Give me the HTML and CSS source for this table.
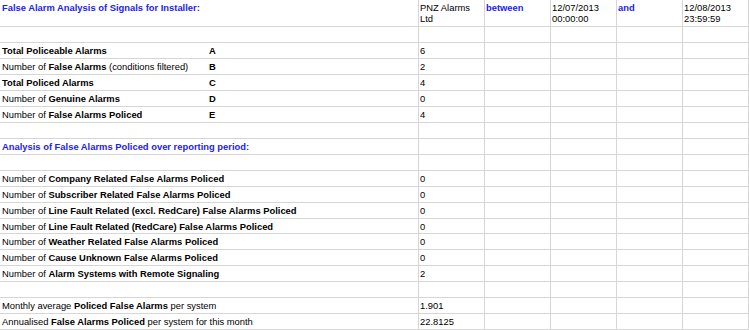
FILE: index.html
```html
<!DOCTYPE html>
<html lang="en">
<head>
<meta charset="utf-8">
<title>False Alarm Analysis</title>
<link rel="stylesheet" href="styles.css">
</head>
<body>
<div class="sheet">
  <div class="c label wide head"><b class="blue">False Alarm Analysis of Signals for Installer:</b></div>
  <div class="c val">PNZ Alarms<br>Ltd</div>
  <div class="c val"><b class="blue">between</b></div>
  <div class="c val">12/07/2013<br>00:00:00</div>
  <div class="c val"><b class="blue">and</b></div>
  <div class="c val">12/08/2013<br>23:59:59</div>

  <div class="c label wide"></div>
  <div class="c val"></div><div class="c val"></div><div class="c val"></div><div class="c val"></div><div class="c val"></div>

  <div class="c label"><b>Total Policeable Alarms</b></div>
  <div class="c letter"><b>A</b></div>
  <div class="c val">6</div><div class="c val"></div><div class="c val"></div><div class="c val"></div><div class="c val"></div>

  <div class="c label">Number of <b>False Alarms</b> (conditions filtered)</div>
  <div class="c letter"><b>B</b></div>
  <div class="c val">2</div><div class="c val"></div><div class="c val"></div><div class="c val"></div><div class="c val"></div>

  <div class="c label"><b>Total Policed Alarms</b></div>
  <div class="c letter"><b>C</b></div>
  <div class="c val">4</div><div class="c val"></div><div class="c val"></div><div class="c val"></div><div class="c val"></div>

  <div class="c label">Number of <b>Genuine Alarms</b></div>
  <div class="c letter"><b>D</b></div>
  <div class="c val">0</div><div class="c val"></div><div class="c val"></div><div class="c val"></div><div class="c val"></div>

  <div class="c label">Number of <b>False Alarms Policed</b></div>
  <div class="c letter"><b>E</b></div>
  <div class="c val">4</div><div class="c val"></div><div class="c val"></div><div class="c val"></div><div class="c val"></div>

  <div class="c label wide"></div>
  <div class="c val"></div><div class="c val"></div><div class="c val"></div><div class="c val"></div><div class="c val"></div>

  <div class="c label wide"><b class="blue">Analysis of False Alarms Policed over reporting period:</b></div>
  <div class="c val"></div><div class="c val"></div><div class="c val"></div><div class="c val"></div><div class="c val"></div>

  <div class="c label wide"></div>
  <div class="c val"></div><div class="c val"></div><div class="c val"></div><div class="c val"></div><div class="c val"></div>

  <div class="c label wide">Number of <b>Company Related False Alarms Policed</b></div>
  <div class="c val">0</div><div class="c val"></div><div class="c val"></div><div class="c val"></div><div class="c val"></div>

  <div class="c label wide">Number of <b>Subscriber Related False Alarms Policed</b></div>
  <div class="c val">0</div><div class="c val"></div><div class="c val"></div><div class="c val"></div><div class="c val"></div>

  <div class="c label wide">Number of <b>Line Fault Related (excl. RedCare) False Alarms Policed</b></div>
  <div class="c val">0</div><div class="c val"></div><div class="c val"></div><div class="c val"></div><div class="c val"></div>

  <div class="c label wide">Number of <b>Line Fault Related (RedCare) False Alarms Policed</b></div>
  <div class="c val">0</div><div class="c val"></div><div class="c val"></div><div class="c val"></div><div class="c val"></div>

  <div class="c label wide">Number of <b>Weather Related False Alarms Policed</b></div>
  <div class="c val">0</div><div class="c val"></div><div class="c val"></div><div class="c val"></div><div class="c val"></div>

  <div class="c label wide">Number of <b>Cause Unknown False Alarms Policed</b></div>
  <div class="c val">0</div><div class="c val"></div><div class="c val"></div><div class="c val"></div><div class="c val"></div>

  <div class="c label wide">Number of <b>Alarm Systems with Remote Signaling</b></div>
  <div class="c val">2</div><div class="c val"></div><div class="c val"></div><div class="c val"></div><div class="c val"></div>

  <div class="c label wide"></div>
  <div class="c val"></div><div class="c val"></div><div class="c val"></div><div class="c val"></div><div class="c val"></div>

  <div class="c label wide">Monthly average <b>Policed False Alarms</b> per system</div>
  <div class="c val">1.901</div><div class="c val"></div><div class="c val"></div><div class="c val"></div><div class="c val"></div>

  <div class="c label wide">Annualised <b>False Alarms Policed</b> per system for this month</div>
  <div class="c val">22.8125</div><div class="c val"></div><div class="c val"></div><div class="c val"></div><div class="c val"></div>
</div>
</body>
</html>
```
FILE: styles.css
```css
html, body {
  margin: 0;
  padding: 0;
  background: #ffffff;
}

.sheet {
  display: grid;
  grid-template-columns: 207px 212px repeat(5, 66px);
  grid-template-rows: 27px repeat(12, 16px) 15px repeat(6, 16px);
  width: 749px;
  font-family: "Liberation Sans", Arial, sans-serif;
  font-size: 9.4px;
  line-height: 11px;
  color: #000000;
}

.c {
  box-sizing: border-box;
  border-bottom: 1px solid #d6d6d6;
  padding: 2px 0 0 1px;
  white-space: nowrap;
  overflow: visible;
}

.label {
  padding-left: 2px;
}

.wide {
  grid-column: span 2;
  border-right: 1px solid #d6d6d6;
}

.letter {
  padding-left: 2px;
  border-right: 1px solid #d6d6d6;
}

.val {
  border-right: 1px solid #d6d6d6;
}

b {
  font-weight: bold;
}

.blue {
  color: #2222f2;
}
```
